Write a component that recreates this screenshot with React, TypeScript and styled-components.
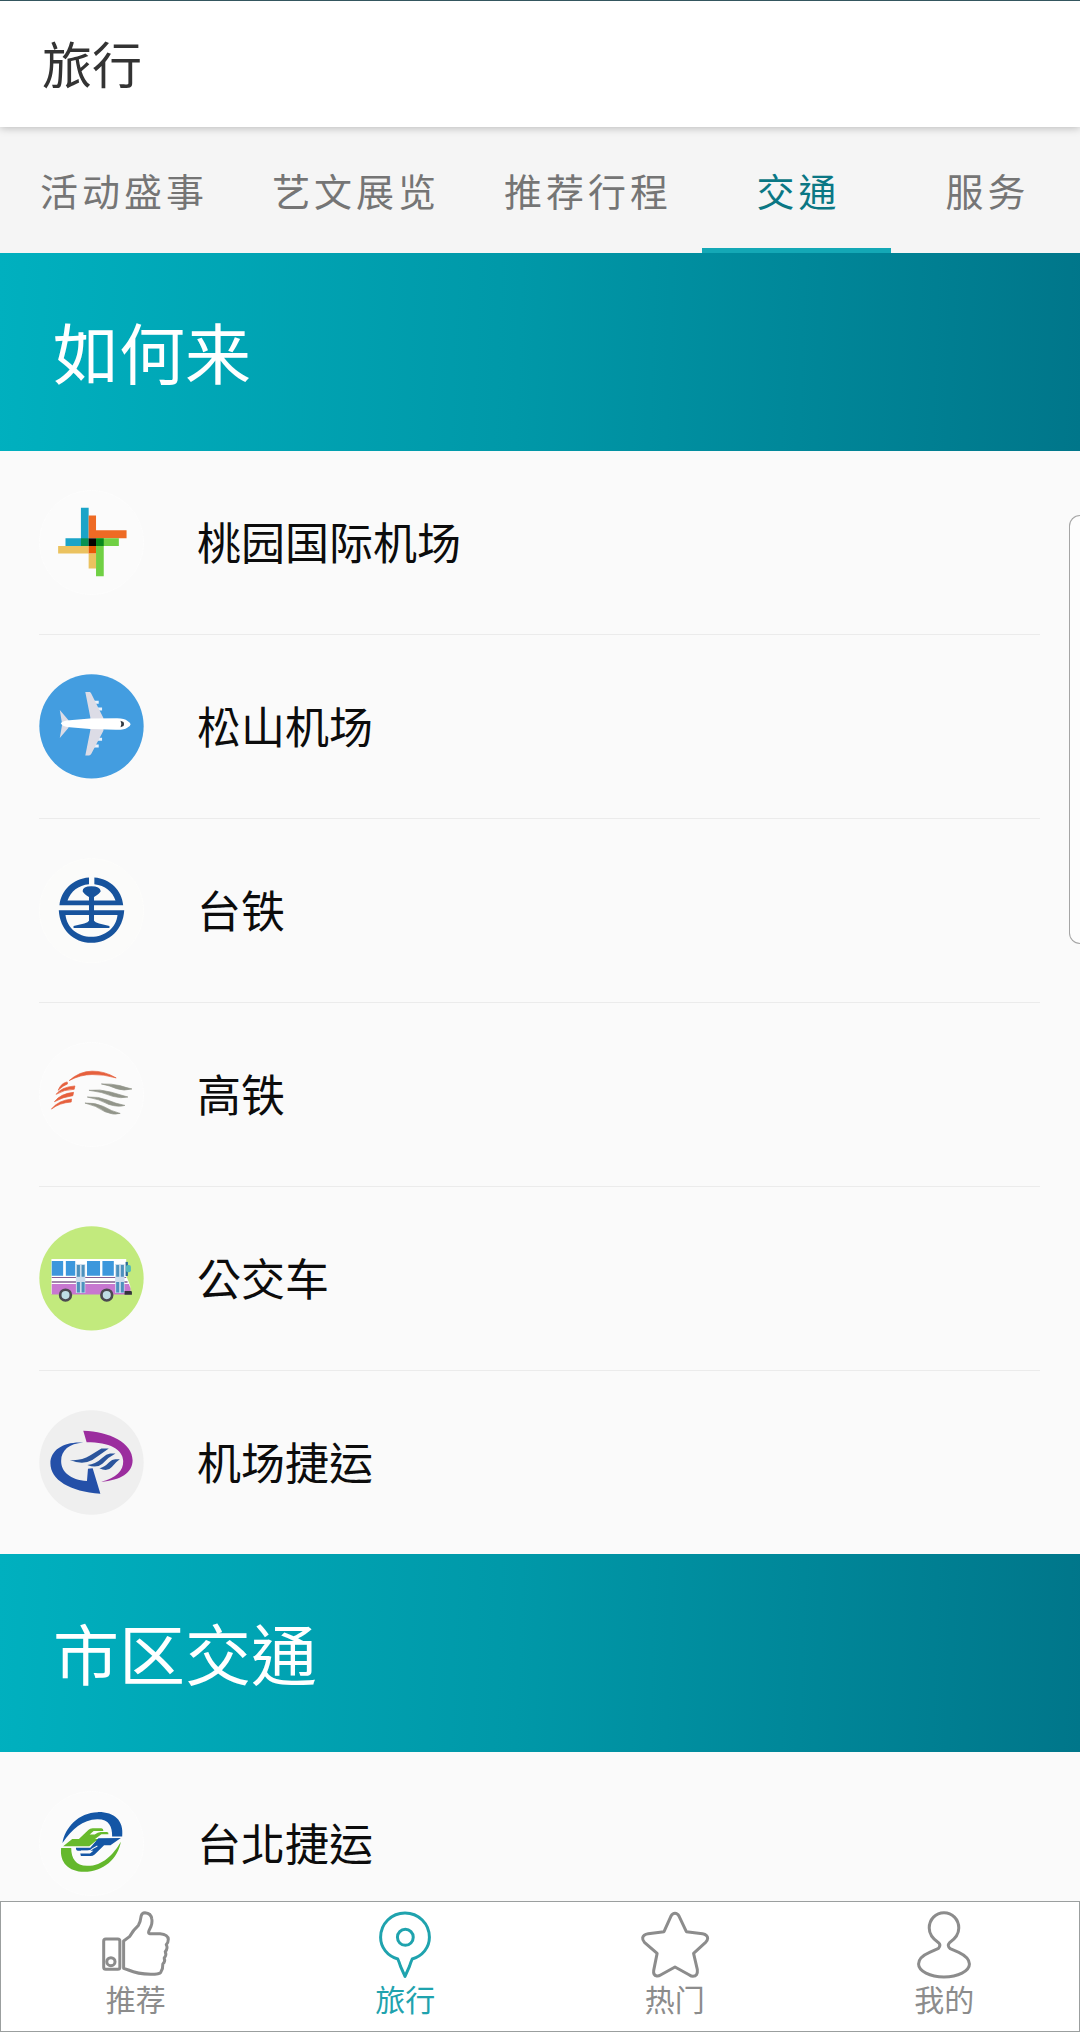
import React from "react";
import styled, { createGlobalStyle } from "styled-components";

const GlobalStyle = createGlobalStyle`
  * { box-sizing: border-box; }
  body {
    margin: 0;
    background: #fafafa;
    font-family: "Noto Sans CJK TC", "Noto Sans CJK SC", sans-serif;
  }
`;

const Screen = styled.div`
  display: flex;
  flex-direction: column;
  height: 100vh;
  overflow: hidden;
  border-top: 1px solid #34565f;
`;

const Header = styled.header`
  flex: none;
  display: flex;
  align-items: center;
  height: 126px;
  padding: 0 42px 4px;
  background: #fff;
  position: relative;
  box-shadow: 0 1px 8px rgba(0, 0, 0, 0.25);
`;

const PageTitle = styled.h1`
  margin: 0;
  font-size: 50px;
  line-height: 72px;
  font-weight: 400;
  color: #333;
`;

const Tabs = styled.nav`
  flex: none;
  display: flex;
  height: 126px;
  padding-left: 6px;
  background: #f5f5f5;
  overflow: hidden;
`;

const Tab = styled.button<{ $active?: boolean }>`
  flex: none;
  min-width: 189px;
  padding: 4px 30px 0 34px;
  border: 0;
  border-bottom: 5px solid ${(p) => (p.$active ? "#14a8b6" : "transparent")};
  background: none;
  font-family: inherit;
  font-size: 38px;
  line-height: 56px;
  letter-spacing: 4px;
  white-space: nowrap;
  color: ${(p) => (p.$active ? "#0b7784" : "#757575")};
`;

const Content = styled.main`
  flex: 1;
  min-height: 0;
  overflow-y: auto;
  scrollbar-width: none;
`;

const Banner = styled.h2`
  display: flex;
  align-items: center;
  height: 198px;
  margin: 0;
  padding: 0 52px 5px 53px;
  background: linear-gradient(92deg, #00b0bf 0%, #0098a8 48%, #00768a 100%);
  color: #fff;
  font-size: 66px;
  line-height: 96px;
  font-weight: 400;
`;

const List = styled.ul`
  margin: 0;
  padding: 0 40px 0 39px;
  list-style: none;
`;

const Item = styled.li`
  border-bottom: 1px solid #ebebeb;
  &:last-child { border-bottom: 0; }
`;

const ItemLink = styled.a`
  display: flex;
  align-items: center;
  gap: 53px;
  height: 183px;
  color: #0c0c0c;
  font-size: 44px;
  line-height: 64px;
  text-decoration: none;
`;

const ItemName = styled.span`
  padding-bottom: 3px;
`;

const Logo = styled.svg`
  flex: none;
  width: 105px;
  height: 105px;
`;

const SidePanel = styled.aside`
  position: fixed;
  top: 515px;
  right: 0;
  width: 11px;
  height: 429px;
  border: 1px solid #a5a5a5;
  border-right: 0;
  border-radius: 16px 0 0 16px;
  background: #fdfdfd;
`;

const BottomNav = styled.nav`
  flex: none;
  display: grid;
  grid-template-columns: repeat(4, 1fr);
  height: 131px;
  border: 1px solid #9b9f9f;
  background: #fff;
`;

const NavButton = styled.button<{ $active?: boolean }>`
  display: flex;
  flex-direction: column;
  align-items: center;
  padding: 10px 0 0;
  border: 0;
  background: none;
  font-family: inherit;
  font-size: 30px;
  line-height: 40px;
  color: ${(p) => (p.$active ? "#1fa3ae" : "#8c8c8c")};
`;

const NavIcon = styled.svg`
  width: 66px;
  height: 66px;
  overflow: visible;
  fill: none;
  stroke: currentColor;
  stroke-width: 3px;
  stroke-linejoin: round;
  & > * { vector-effect: non-scaling-stroke; }
`;

const Disc = ({ cy, fill, stroke }: { cy: number; fill: string; stroke?: string }) => (
  <circle cx="214.5" cy={cy} r="155.5" fill={fill} stroke={stroke ?? "none"} strokeWidth="2" />
);

const TaoyuanLogo = () => (
  <Logo viewBox="58 32 313 313" aria-hidden="true">
    <Disc cy={188.5} fill="#fbfbfb" stroke="#fdfdfd" />
    <path d="M183 85h23v91h-23zM137 176h68v23h-68z" fill="#1aa4c8" />
    <path d="M206 108h22v44h91v24H206z" fill="#ee6a24" />
    <path d="M228 176h68v23h-45v90h-23z" fill="#70d044" />
    <path d="M115 199h91v22h-91zM206 221h22v45h-22z" fill="#ebc25f" />
    <path d="M183 176h23v23h-23z" fill="#079252" />
    <path d="M228 176h23v23h-23z" fill="#07871c" />
    <path d="M206 199h22v22h-22z" fill="#e95a05" />
    <path d="M206 176h22v23h-22z" fill="#090400" />
  </Logo>
);

const PlaneLogo = () => (
  <Logo viewBox="58 44 313 313" aria-hidden="true">
    <Disc cy={200} fill="#439de0" />
    <path d="M221 124h15v9h-14zM231 144h15v9h-14zM231 234h15v9h-14zM221 254h15v9h-14z" fill="#e9f1fb" />
    <path d="M196 98h13q3 0 5 5l36 72v38l-36 69q-3 5-7 5h-11l15-75v-38z" fill="#dcdce6" />
    <path d="M120 151l26 31v22l-26 31 7-41z" fill="#dcdce6" />
    <path d="M123 191q6-8 26-9l61-5 81-1q22 0 31 8 9 6 9 10 0 5-10 10-10 7-34 6l-77-2-61-5q-22-2-26-12z" fill="#fff" />
    <path d="M301 183l9 4q3 6 0 12l-9 4q5-10 0-20z" fill="#333b44" />
  </Logo>
);

const RailwayLogo = () => (
  <Logo viewBox="58 41 313 313" aria-hidden="true">
    <Disc cy={198} fill="#fbfbfa" stroke="#fdfdfc" />
    <g fill="#17539d">
      <path d="M119 182C124 137 158 103 207 99v20C175 122 153 140 143 168h143c-9-28-31-45-63-49V99c48 4 82 38 86 83z" />
      <path fillRule="evenodd" d="M117 197h195c-3 57-44 97-98 97s-94-40-97-97zM137 211c4 38 37 65 77 65s75-27 78-65z" />
      <path d="M188 140q0-15 26-15t28 15q-2 6-20 17v71q3 5 15 8l31 8v6H161v-6l32-8q12-3 14-8v-71q-16-9-19-17z" />
    </g>
  </Logo>
);

const HighSpeedLogo = () => (
  <Logo viewBox="58 38 313 313" aria-hidden="true">
    <Disc cy={194.5} fill="#fbfbfb" stroke="#fdfdfd" />
    <g fill="#e6603d" stroke="#e6603d" strokeWidth="2" strokeLinejoin="round">
      <path d="M148 153q31-28 68-28 36-1 72 20-38-11-72-10-34 0-68 18z" />
      <path d="M115 182q9-22 27-25l1 6q-12 4-28 19z" />
      <path d="M109 194q16-22 56-25l-2 10q-29 0-54 15z" />
      <path d="M104 216q18-24 57-28l-2 10q-31 4-55 18z" />
      <path d="M95 238q20-26 60-30l-1 9q-34 2-59 21z" />
    </g>
    <g fill="#92958a" stroke="#92958a" strokeWidth="2" strokeLinejoin="round">
      <path d="M244 163q31-1 55 5 18 6 36 10-24 7-46-1-20-9-45-14z" />
      <path d="M207 182q33-4 64 5l52 15q-20 5-45-2-33-14-71-18z" />
      <path d="M202 202q32-2 60 9 25 11 52 16-20 6-48-3-29-16-64-22z" />
      <path d="M195 220q29-2 55 10 24 14 50 21-20 6-45-5-28-19-60-26z" />
    </g>
  </Logo>
);

const BusLogo = () => (
  <Logo viewBox="58 35 313 313" aria-hidden="true">
    <Disc cy={191} fill="#c2ea7d" />
    <path d="M95 133h223v50l12 30v25H95z" fill="#fff" />
    <path d="M96 208h230l5 14v17H96z" fill="#c777d0" />
    <path d="M96 187h222v3H96zM96 200h226v4H96z" fill="#855f91" />
    <path d="M96 139h34v44H96zM138 139h28v44h-28zM201 139h39v44h-39zM247 139h34v44h-34z" fill="#3c97dc" />
    <path d="M168 148h28v87h-28zM285 148h28v87h-28z" fill="#cddded" />
    <path d="M171 151h9v35h-9zM185 151h9v35h-9zM171 202h9v31h-9zM185 202h9v31h-9zM288 151h9v35h-9zM302 151h9v35h-9zM288 202h9v31h-9zM302 202h9v31h-9z" fill="#4d91bd" />
    <path d="M316 142h7v42h-7z" fill="#2a6b98" />
    <rect x="317" y="151" width="15" height="22" rx="6" fill="#54b9ba" />
    <path d="M313 229h19q3 0 3 4v7h-22z" fill="#33343b" />
    <g fill="#bfdde5" stroke="#4b4950" strokeWidth="8">
      <circle cx="137" cy="241" r="16" />
      <circle cx="260" cy="241" r="16" />
    </g>
  </Logo>
);

const AirportMetroLogo = () => (
  <Logo viewBox="58 32 313 313" aria-hidden="true">
    <Disc cy={188.5} fill="#efefef" />
    <path d="M190 94C268 96 337 131 337 182c0 38-36 60-94 64 46-12 67-33 66-62-1-35-40-56-109-56z" fill="#9b2d9e" />
    <path d="M190 129c-42 3-66 23-66 55 0 32 27 56 77 60l3-37 14-1 23 76C150 275 92 241 92 191c0-41 41-66 98-62z" fill="#2450a8" />
    <g fill="#2b559c">
      <path d="M150 181q34 3 60-13l34-21h22q-28 20-49 34-29 16-67 0z" />
      <path d="M202 196q25-3 45-22 12-10 23-12h16q-20 10-39 30-17 15-45 4z" />
      <path d="M238 206q15-3 29-18 9-9 18-9h14q-11 7-24 23-13 16-37 4z" />
    </g>
  </Logo>
);

const TaipeiMetroLogo = () => (
  <Logo viewBox="58 38 313 313" aria-hidden="true">
    <Disc cy={194.5} fill="#fbfbfb" stroke="#fdfdfd" />
    <path d="M128 193c7-46 48-91 105-92 48-1 79 24 73 73h-30c1-31-10-53-45-52-42 1-75 29-103 71z" fill="#1456a5" />
    <path d="M124 208h30c0 31 14 53 47 53 46 1 79-34 101-72-8 50-53 90-109 90-47 0-74-28-69-71z" fill="#64b82c" />
    <path d="M130 203l27-22h20l28-27q5-5 13-5h26q6 0 6 8h-29l-12 11h15q9-8 18-8h18q6 0 5 7h-21l-19 14h41q3 0-4 6h-35l-19 16z" fill="#68ba2c" />
    <path d="M302 178l-31 22h-19l-28 27q-6 5-12 5h-25q-6 0-6-8h29l10-8h-46q-6 0-6-9h43l24-28z" fill="#1456a5" />
    <path d="M183 217h19q9 0 17-8l13-7" fill="none" stroke="#fbfbfb" strokeWidth="3" />
  </Logo>
);

const ThumbIcon = () => (
  <NavIcon viewBox="296 66 192 198" preserveAspectRatio="none" aria-hidden="true">
    <rect x="298" y="147" width="47" height="91" rx="6" />
    <ellipse cx="319" cy="215" rx="12" ry="12" />
    <path d="M356 153L373 140Q384 120 399 106Q405 95 407 78Q409 68 418 68Q436 69 438 87Q441 101 431 119Q425 132 433 131H462Q485 133 486 148Q486 158 480 164Q486 174 477 185Q482 195 474 204Q478 214 470 222Q471 235 464 247Q460 253 435 253Q397 252 370 240L356 235Z" />
  </NavIcon>
);

const PinIcon = () => (
  <NavIcon viewBox="1080 66 192 198" preserveAspectRatio="none" aria-hidden="true">
    <path d="M1155 207C1125 198 1105 173 1105 142C1105 101 1137 69 1176 69S1247 101 1247 142C1247 173 1227 198 1197 207Q1193 216 1189 229L1176 259L1163 229Q1159 216 1155 207Z" />
    <ellipse cx="1177" cy="142" rx="23" ry="24" />
  </NavIcon>
);

const StarIcon = () => (
  <NavIcon viewBox="296 66 192 198" preserveAspectRatio="none" aria-hidden="true">
    <path d="M380 79Q385 70 392 70T404 79L425 125L472 131Q487 134 487 145Q487 151 481 157L446 190L457 239Q459 259 444 259Q439 259 434 255L392 231L350 255Q344 259 339 258Q328 256 330 241L340 190L303 157Q297 150 298 143Q300 133 314 131L360 125Z" />
  </NavIcon>
);

const PersonIcon = () => (
  <NavIcon viewBox="1080 66 192 198" preserveAspectRatio="none" aria-hidden="true">
    <path d="M1160 175Q1168 165 1160 158C1144 147 1133 133 1133 114C1133 88 1152 68 1176 68S1219 88 1219 114C1219 133 1208 147 1192 158Q1184 167 1194 176L1219 187C1239 197 1250 208 1250 222C1250 243 1217 261 1176 261S1102 243 1102 222C1102 208 1114 196 1134 187Z" />
  </NavIcon>
);

const tabs = ["活动盛事", "艺文展览", "推荐行程", "交通", "服务"];

const sections = [
  {
    title: "如何来",
    items: [
      { name: "桃园国际机场", Icon: TaoyuanLogo },
      { name: "松山机场", Icon: PlaneLogo },
      { name: "台铁", Icon: RailwayLogo },
      { name: "高铁", Icon: HighSpeedLogo },
      { name: "公交车", Icon: BusLogo },
      { name: "机场捷运", Icon: AirportMetroLogo },
    ],
  },
  { title: "市区交通", items: [{ name: "台北捷运", Icon: TaipeiMetroLogo }] },
];

const navItems = [
  { label: "推荐", Icon: ThumbIcon },
  { label: "旅行", Icon: PinIcon },
  { label: "热门", Icon: StarIcon },
  { label: "我的", Icon: PersonIcon },
];

export default function App() {
  const [tab, setTab] = React.useState("交通");
  const [page, setPage] = React.useState("旅行");

  return (
    <>
      <GlobalStyle />
      <Screen lang="zh-TW">
        <Header>
          <PageTitle>旅行</PageTitle>
        </Header>
        <Tabs>
          {tabs.map((name) => (
            <Tab key={name} type="button" $active={name === tab} onClick={() => setTab(name)}>
              {name}
            </Tab>
          ))}
        </Tabs>
        <Content>
          {sections.map(({ title, items }) => (
            <section key={title}>
              <Banner>{title}</Banner>
              <List>
                {items.map(({ name, Icon }) => (
                  <Item key={name}>
                    <ItemLink href="#">
                      <Icon />
                      <ItemName>{name}</ItemName>
                    </ItemLink>
                  </Item>
                ))}
              </List>
            </section>
          ))}
        </Content>
        <BottomNav>
          {navItems.map(({ label, Icon }) => (
            <NavButton key={label} type="button" $active={label === page} onClick={() => setPage(label)}>
              <Icon />
              {label}
            </NavButton>
          ))}
        </BottomNav>
      </Screen>
      <SidePanel />
    </>
  );
}
